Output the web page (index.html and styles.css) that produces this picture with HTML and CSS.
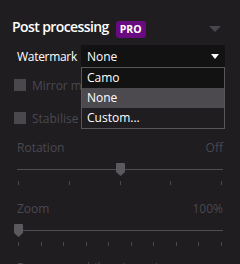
FILE: index.html
```html
<!DOCTYPE html>
<html>
<head>
<meta charset="utf-8">
<link rel="stylesheet" href="styles.css">
</head>
<body>
<div class="panel">
  <div class="header">
    <span class="title">Post processing</span>
    <span class="pro">PRO</span>
    <svg class="collapse" width="12" height="6" viewBox="0 0 12 6"><polygon points="0,0 12,0 6,6" fill="#48464b"/></svg>
  </div>
  <div class="wm-row">
    <span class="wm-label">Watermark</span>
    <div class="select">
      <span>None</span>
      <svg class="caret" width="8" height="5" viewBox="0 0 8 5"><polygon points="0,0 8,0 4,5" fill="#ffffff"/></svg>
      <ul class="menu">
        <li class="item">Camo</li>
        <li class="item active">None</li>
        <li class="item last">Custom...</li>
      </ul>
    </div>
  </div>
  <label class="check first"><span class="box"></span><span>Mirror my video</span></label>
  <label class="check"><span class="box"></span><span>Stabilise video</span></label>
  <div class="slider rot">
    <div class="slabels"><span>Rotation</span><span>Off</span></div>
    <div class="track-wrap">
      <div class="track"></div>
      <svg class="thumb" style="left:99px" width="9" height="13" viewBox="0 0 9 13"><path d="M1,0 H8 Q9,0 9,1 V9 L4.5,13 L0,9 V1 Q0,0 1,0 Z" fill="#5b595e"/></svg>
    </div>
    <div class="ticks"><i></i><i></i><i></i><i></i><i></i></div>
  </div>
  <div class="slider zoom">
    <div class="slabels"><span>Zoom</span><span>100%</span></div>
    <div class="track-wrap">
      <div class="track"></div>
      <svg class="thumb" style="left:-3px" width="9" height="13" viewBox="0 0 9 13"><path d="M1,0 H8 Q9,0 9,1 V9 L4.5,13 L0,9 V1 Q0,0 1,0 Z" fill="#5b595e"/></svg>
    </div>
    <div class="ticks"><i></i><i></i><i></i><i></i><i></i><i></i><i></i><i></i><i></i><i></i></div>
  </div>
  <div class="footer">Reset on mobile orientation</div>
</div>
</body>
</html>
```

FILE: styles.css
```css
html, body {
  margin: 0;
  padding: 0;
  background: #1f1d20;
  width: 240px;
  height: 264px;
  overflow: hidden;
}
body {
  font-family: "Open Sans", "Noto Sans", sans-serif;
  color: #ffffff;
}
.panel {
  display: flex;
  flex-direction: column;
  padding: 18px 15px 0 12px;
}
.header {
  display: flex;
  align-items: center;
  height: 22px;
}
.title {
  font-size: 14px;
  font-weight: 600;
  letter-spacing: -0.6px;
  color: #ffffff;
  margin-bottom: 5px;
}
.pro {
  margin-left: 7px;
  background: #6a0a80;
  color: #ffffff;
  font-size: 10.5px;
  font-weight: 700;
  border-radius: 3px;
  padding: 0 4px;
  height: 17px;
  line-height: 17px;
}
.collapse {
  margin-left: auto;
  margin-right: 4px;
}
.wm-row {
  display: flex;
  align-items: center;
  margin-top: 5px;
  margin-left: 5px;
}
.wm-label {
  font-size: 12px;
  width: 64px;
  letter-spacing: -0.3px;
}
.select {
  position: relative;
  flex: 1;
  height: 22px;
  background: #121212;
  display: flex;
  align-items: center;
  padding-left: 6px;
  font-size: 12px;
}
.caret {
  margin-left: auto;
  margin-right: 6px;
}
.menu {
  position: absolute;
  left: 0;
  top: 22px;
  right: 0;
  margin: 0;
  padding: 0;
  list-style: none;
  border: 1px solid #59575c;
  background: #1f1d20;
  z-index: 2;
}
.item {
  height: 20px;
  line-height: 20px;
  padding-left: 5px;
  font-size: 12px;
  background: #121212;
}
.item.active {
  background: #4c494f;
}
.item.last {
  background: #1f1d20;
}
.check {
  display: flex;
  align-items: center;
  gap: 6px;
  margin-left: 2px;
  color: #4a4850;
  font-size: 12px;
  height: 20px;
  margin-top: 13px;
}
.check.first { margin-top: 8px; }
.box {
  width: 12px;
  height: 12px;
  background: #4a484c;
}
.slider {
  margin-left: 5px;
  width: 206px;
  display: flex;
  flex-direction: column;
}
.slider.rot { margin-top: 11px; }
.slider.zoom { margin-top: 15px; }
.slabels {
  display: flex;
  justify-content: space-between;
  color: #4a4850;
  font-size: 12px;
  height: 18px;
  line-height: 18px;
}
.track-wrap {
  position: relative;
  height: 13px;
  margin-top: 6px;
}
.track {
  position: absolute;
  left: 0;
  right: 0;
  top: 6px;
  height: 1px;
  background: #504e53;
}
.thumb {
  position: absolute;
  top: 0;
}
.ticks {
  display: flex;
  justify-content: space-between;
  margin-top: 5px;
  padding: 0 1px;
}
.ticks i {
  display: block;
  width: 1px;
  height: 4px;
  background: #4a484c;
}
.footer {
  margin-top: 13px;
  margin-left: 5px;
  font-size: 12px;
  color: #4a4850;
  white-space: nowrap;
}
```
